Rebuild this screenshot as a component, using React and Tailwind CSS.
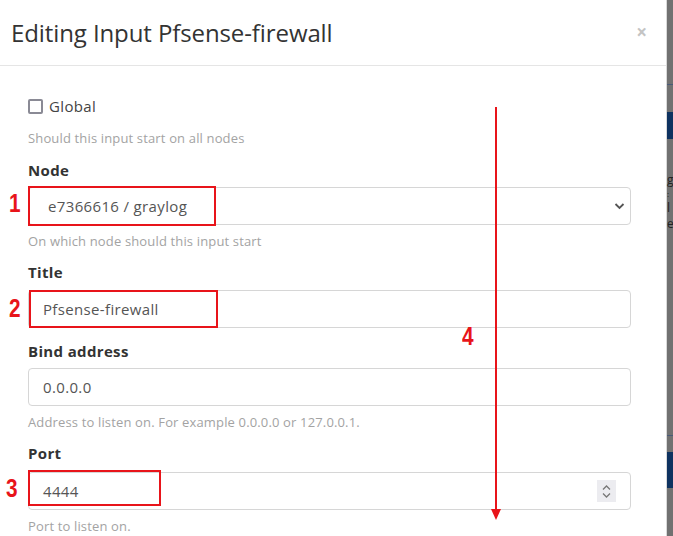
export default function App() {
  return (
    <div className="relative flex h-[536px] w-[673px] overflow-hidden bg-[#717171] font-['Open_Sans',sans-serif]">
      <div className="w-[667px] shrink-0 border-r border-[#d9d9d9] bg-white">
        <header className="flex h-[66px] items-center justify-between border-b border-[#e5e5e5] pl-[11px] pr-[19px]">
          <h1 className="text-[24px] tracking-[-0.1px] text-[#333]">Editing Input Pfsense-firewall</h1>
          <span className="text-[19px] font-bold leading-none text-[#c4c4c4]">×</span>
        </header>

        <div className="flex flex-col pl-[28px] pr-[35px] pt-[30px] tracking-[0.35px]">
          <label className="flex h-5 items-center gap-[6px] text-[15px] text-[#444]">
            <span className="h-[15px] w-[15px] rounded-[2px] border-2 border-[#8a8a95] bg-white" />
            Global
          </label>
          <Help className="mt-[14px]">Should this input start on all nodes</Help>

          <Label className="mt-[13px]">Node</Label>
          <div className="mt-[7px] flex h-[38px] items-center justify-between rounded-[4px] border border-[#d6d6d6] pl-[19px] pr-[5px] text-[15px] text-[#555]">
            <span>e7366616 / graylog</span>
            <svg width="11" height="8" viewBox="0 0 11 8" fill="none" stroke="#555" strokeWidth="1.8">
              <path d="M1.5 2l4 4 4-4" />
            </svg>
          </div>
          <Help className="mt-[8px]">On which node should this input start</Help>

          <Label className="mt-[12px]">Title</Label>
          <Field className="mt-[8px]">Pfsense-firewall</Field>

          <Label className="mt-[13px]">Bind address</Label>
          <Field className="mt-[7px]">0.0.0.0</Field>
          <Help className="mt-[8px]">Address to listen on. For example 0.0.0.0 or 127.0.0.1.</Help>

          <Label className="mt-[12px]">Port</Label>
          <Field className="mt-[9px]">
            <span>4444</span>
            <span className="ml-auto mr-[14px] flex h-[22px] w-[19px] flex-col items-center justify-center gap-[3px] bg-[#ececf0]">
              <svg width="9" height="5" viewBox="0 0 9 5" fill="none" stroke="#777" strokeWidth="1.3">
                <path d="M1 4.5l3.5-3.5 3.5 3.5" />
              </svg>
              <svg width="9" height="5" viewBox="0 0 9 5" fill="none" stroke="#777" strokeWidth="1.3">
                <path d="M1 .5l3.5 3.5 3.5-3.5" />
              </svg>
            </span>
          </Field>
          <Help className="mt-[8px]">Port to listen on.</Help>
        </div>
      </div>

      {/* page behind the modal */}
      <div className="relative flex-1">
        <div className="absolute left-0 right-0 top-[84px] h-px bg-[#4a5a78]" />
        <div className="absolute left-0 right-0 top-[112px] h-[27px] bg-[#0e3260]" />
        <div className="absolute left-0 top-[172px] flex flex-col text-[#222]">
          <span className="h-[16px] text-[12px] leading-[16px]">g</span>
          <span className="h-[12px] text-[8px] leading-[12px]">:</span>
          <span className="h-[16px] text-[12px] leading-[16px]">l</span>
          <span className="h-[16px] text-[12px] leading-[16px]">e</span>
        </div>
        <div className="absolute left-0 right-0 top-[435px] h-px bg-[#4a5a78]" />
        <div className="absolute left-0 right-0 top-[452px] h-[36px] bg-[#0e3260]" />
      </div>

      {/* annotations */}
      <div className="absolute left-[28px] top-[186px] h-[40px] w-[188px] border-2 border-[#e8141a]" />
      <div className="absolute left-[29px] top-[290px] h-[38px] w-[189px] border-2 border-[#e8141a]" />
      <div className="absolute left-[28px] top-[470px] h-[36px] w-[133px] border-2 border-[#e8141a]" />
      <Num className="left-[9px] top-[190px]">1</Num>
      <Num className="left-[9px] top-[295px]">2</Num>
      <Num className="left-[6px] top-[475px]">3</Num>
      <Num className="left-[462px] top-[323px]">4</Num>
      <div className="absolute left-[495px] top-[107px] h-[404px] w-[2px] bg-[#e8141a]" />
      <div className="absolute left-[491px] top-[509px] h-0 w-0 border-x-[5px] border-t-[11px] border-x-transparent border-t-[#e8141a]" />
    </div>
  );
}

function Label({ className, children }) {
  return <div className={`h-5 text-[15px] font-bold leading-5 text-[#333] ${className}`}>{children}</div>;
}

function Help({ className, children }) {
  return <div className={`h-[17px] text-[13px] leading-[17px] tracking-[0.15px] text-[#a3a3a3] ${className}`}>{children}</div>;
}

function Field({ className, children }) {
  return (
    <div className={`flex h-[38px] items-center rounded-[4px] border border-[#d6d6d6] pl-[14px] text-[15px] text-[#555] ${className}`}>
      {children}
    </div>
  );
}

function Num({ className, children }) {
  return (
    <span className={`absolute origin-left scale-x-[0.8] font-['Liberation_Sans',sans-serif] text-[26px] font-bold leading-none text-[#e8141a] ${className}`}>
      {children}
    </span>
  );
}
